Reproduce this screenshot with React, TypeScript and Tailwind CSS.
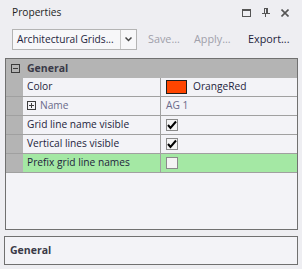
import React from "react";

const rows = [
  { label: "Color", kind: "color" },
  { label: "Name", kind: "name" },
  { label: "Grid line name visible", kind: "check", checked: true },
  { label: "Vertical lines visible", kind: "check", checked: true },
  { label: "Prefix grid line names", kind: "check", checked: false, selected: true },
];

function Check({ checked }: { checked: boolean }) {
  return (
    <div className="w-[12px] h-[12px] border border-[#8a8a8a] bg-[#f4f4f4] flex items-center justify-center">
      {checked && (
        <svg width="10" height="10" viewBox="0 0 10 10">
          <path d="M1 5 L3.5 8 L9 1.5" stroke="#000" strokeWidth="2" fill="none" />
        </svg>
      )}
    </div>
  );
}

function PlusMinus({ plus }: { plus: boolean }) {
  return (
    <div className="w-[9px] h-[9px] border border-[#3c3c3c] relative shrink-0">
      <div className="absolute left-[1px] right-[1px] top-[3px] h-[1px] bg-[#3c3c3c]" />
      {plus && <div className="absolute top-[1px] bottom-[1px] left-[3px] w-[1px] bg-[#3c3c3c]" />}
    </div>
  );
}

export default function App() {
  return (
    <div
      className="w-[302px] h-[269px] bg-[#eeeef2] text-[10.2px] text-[#1e1e3c] overflow-hidden flex flex-col"
      style={{ fontFamily: '"Open Sans", "Noto Sans", sans-serif' }}
    >
      {/* title */}
      <div className="h-[25px] flex items-center justify-between pl-[12px] pr-[13px] text-[#1e1e1e]">
        <span>Properties</span>
        <div className="flex items-center gap-[11px]">
          <svg width="9" height="8" viewBox="0 0 9 8">
            <rect x="0.5" y="0.5" width="8" height="7" fill="none" stroke="#555" />
            <rect x="0" y="0" width="9" height="2" fill="#555" />
          </svg>
          <svg width="8" height="9" viewBox="0 0 8 9">
            <rect x="2.5" y="0.5" width="3" height="5" fill="none" stroke="#555" />
            <rect x="4" y="1" width="1" height="4" fill="#555" />
            <rect x="0" y="5" width="8" height="1" fill="#555" />
            <rect x="3" y="6" width="1" height="3" fill="#555" />
          </svg>
          <svg width="8" height="8" viewBox="0 0 8 8">
            <path d="M0.5 0.5 L7.5 7.5 M7.5 0.5 L0.5 7.5" stroke="#555" strokeWidth="1.6" />
          </svg>
        </div>
      </div>

      {/* toolbar */}
      <div className="h-[33px] flex items-start pt-[4px] pl-[12px]">
        <div className="w-[125px] h-[21px] border border-[#b4b4b4] bg-[#f7f7f9] flex">
          <div className="flex-1 pl-[4px] flex items-center whitespace-nowrap overflow-hidden">
            Architectural Grids...
          </div>
          <div className="w-[16px] border-l border-[#c8c8c8] flex items-center justify-center">
            <svg width="7" height="5" viewBox="0 0 7 5">
              <path d="M0.5 0.5 L3.5 3.5 L6.5 0.5" stroke="#444" strokeWidth="1.5" fill="none" />
            </svg>
          </div>
        </div>
        <div className="flex items-center h-[21px] ml-[11px] text-[10.8px]">
          <span className="w-[46px] text-[#a0a0aa]">Save...</span>
          <span className="w-[54px] text-[#a0a0aa]">Apply...</span>
          <span className="text-[#1e1e3c]">Export...</span>
        </div>
      </div>

      {/* grid */}
      <div className="ml-[5px] w-[293px] h-[172px] border border-[#707070] bg-[#f3f3f7] flex flex-col">
        <div className="h-[19px] bg-[#b4b4b4] flex items-center shrink-0">
          <div className="w-[17px] flex justify-center pl-[1px]">
            <PlusMinus plus={false} />
          </div>
          <span className="font-bold text-[#3a3a48] pl-[4px] text-[10.5px]">General</span>
        </div>
        {rows.map((r) => (
          <div
            key={r.label}
            className={`h-[19px] flex shrink-0 border-b border-[#a0a0a0] ${r.selected ? "bg-[#a4e8a4]" : ""}`}
          >
            <div className="w-[17px] bg-[#b4b4b4]" />
            <div className="w-[138px] border-r border-[#a0a0a0] flex items-center pl-[4px] whitespace-nowrap">
              {r.kind === "name" ? (
                <span className="flex items-center gap-[4px] text-[#6a6a8a]">
                  <PlusMinus plus={true} />
                  Name
                </span>
              ) : (
                r.label
              )}
            </div>
            <div className="flex-1 flex items-center pl-[5px]">
              {r.kind === "color" && (
                <span className="flex items-center gap-[6px]">
                  <span className="w-[21px] h-[14px] bg-[#ff4500] border border-[#1e1e1e]" />
                  OrangeRed
                </span>
              )}
              {r.kind === "name" && <span className="text-[#6a6a8a]">AG 1</span>}
              {r.kind === "check" && <Check checked={!!r.checked} />}
            </div>
          </div>
        ))}
      </div>

      {/* description */}
      <div className="ml-[4px] mt-[6px] w-[294px] h-[29px] border border-[#707070] bg-[#f3f3f7] flex items-center pl-[5px]">
        <span className="font-bold text-[#3a3a48] text-[10.5px]">General</span>
      </div>
    </div>
  );
}
